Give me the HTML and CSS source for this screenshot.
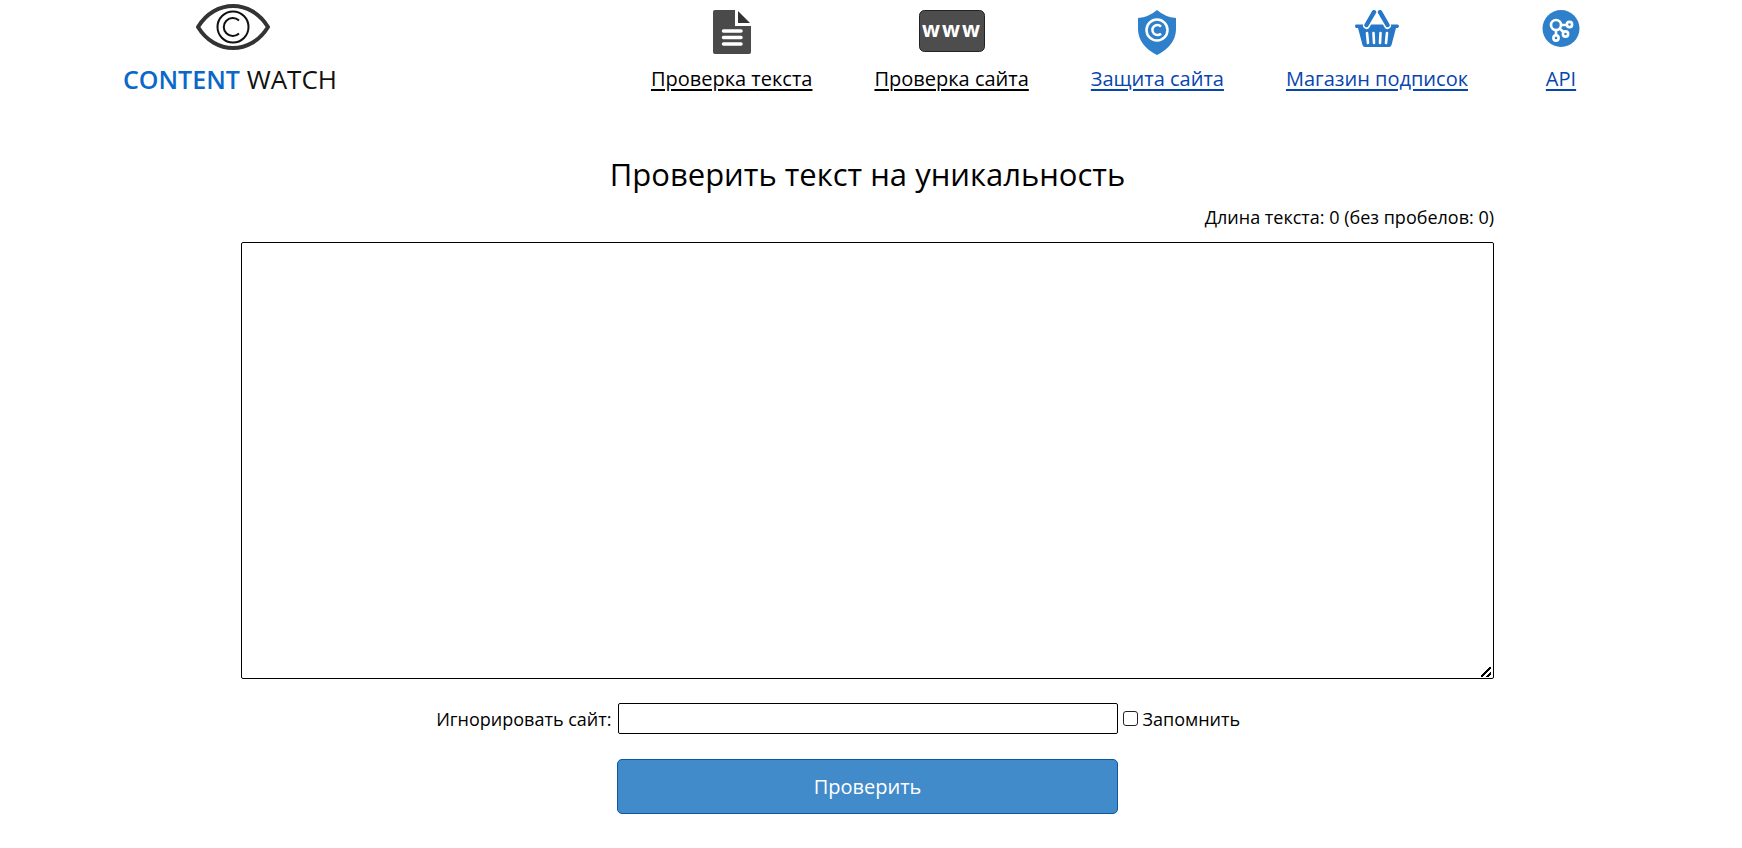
FILE: index.html
```
<!DOCTYPE html>
<html lang="ru">
<head>
<meta charset="utf-8">
<meta name="viewport" content="width=device-width, initial-scale=1">
<title>Content Watch</title>
<link rel="stylesheet" href="styles.css">
</head>
<body>
<header class="header">
  <a class="logo" href="#">
    <svg class="logo-eye" width="76" height="48" viewBox="0 0 76 48" fill="none" aria-hidden="true">
      <path d="M3 24C20-4 56-4 73 24C56 52 20 52 3 24Z" stroke="#333" stroke-width="4" stroke-linejoin="round"/>
      <circle cx="38" cy="24" r="15.500" stroke="#111" stroke-width="2"/>
      <path d="M44 17.500A9 9 0 1 0 44 30.500" stroke="#111" stroke-width="2"/>
    </svg>
    <span class="logo-text"><b class="logo-accent">CONTENT</b> WATCH</span>
  </a>
  <nav class="nav">
    <a class="nav-link nav-dark" href="#">
      <svg class="nav-icon" width="38" height="44" viewBox="0 0 38 44" aria-hidden="true">
        <path d="M2 0H22V16H38V42Q38 44 36 44H2Q0 44 0 42V2Q0 0 2 0Z" fill="#4a4a4a"/>
        <path d="M25 1V13H37Z" fill="#333"/>
        <path d="M10.500 21H28M10.500 27.500H28M10.500 34H28" stroke="#fff" stroke-width="3.500" stroke-linecap="round"/>
      </svg>
      <span>Проверка текста</span>
    </a>
    <a class="nav-link nav-dark" href="#">
      <svg class="nav-icon" width="66" height="44" viewBox="0 0 66 44" aria-hidden="true">
        <rect x=".5" y=".5" width="65" height="41" rx="5" fill="#4d4d4d" stroke="#222"/>
        <g class="www" text-anchor="middle">
          <text x="12" y="27">w</text>
          <text x="32" y="27">w</text>
          <text x="52" y="27">w</text>
        </g>
      </svg>
      <span>Проверка сайта</span>
    </a>
    <a class="nav-link" href="#">
      <svg class="nav-icon" width="38" height="45" viewBox="0 0 38 45" fill="none" aria-hidden="true">
        <path d="M19 0Q27 7 38 8V20Q37 36 19 45Q1 36 0 20V8Q11 7 19 0Z" fill="#2f80cb"/>
        <circle cx="19" cy="20" r="10.500" stroke="#fff" stroke-width="2.500"/>
        <path d="M23 16.500A5 5 0 1 0 23 23.500" stroke="#fff" stroke-width="2.500"/>
      </svg>
      <span>Защита сайта</span>
    </a>
    <a class="nav-link" href="#">
      <svg class="nav-icon" width="44" height="38" viewBox="0 0 44 38" fill="none" aria-hidden="true">
        <path d="M1.500 14.500H42.500Q44 14.500 44 16T42.500 18H41L36.500 35Q36 37 34 37H10Q8 37 7.500 35L3 18H1.500Q0 18 0 16T1.500 14.500Z" fill="#2677c7"/>
        <path d="M11.500 15.500L19 2M32.500 15.500L25 2" stroke="#fff" stroke-width="7" stroke-linecap="round"/>
        <path d="M11.500 15L19 2.200M32.500 15L25 2.200" stroke="#2677c7" stroke-width="4.400" stroke-linecap="round"/>
        <path d="M12 23L13 33M18.500 23L19 33M25.500 23L25 33M32 23L31 33" stroke="#fff" stroke-width="2.600" stroke-linecap="round"/>
      </svg>
      <span>Магазин подписок</span>
    </a>
    <a class="nav-link" href="#">
      <svg class="nav-icon" width="38" height="38" viewBox="0 0 38 38" fill="none" aria-hidden="true">
        <circle cx="19" cy="18.500" r="18.500" fill="#2f80cb"/>
        <g stroke="#fff" stroke-width="2.600">
          <circle cx="14" cy="15" r="5"/>
          <circle cx="27.500" cy="14.500" r="2.600"/>
          <circle cx="23.500" cy="24" r="2.600"/>
          <circle cx="14" cy="28" r="2.600"/>
          <path d="M19 15H25M17.500 18.500L21.500 22M14 20V25.500"/>
        </g>
      </svg>
      <span>API</span>
    </a>
  </nav>
</header>
<main class="main">
  <h1 class="title">Проверить текст на уникальность</h1>
  <form class="form">
    <label class="counter" for="text">Длина текста: 0 (без пробелов: 0)</label>
    <textarea class="text" id="text"></textarea>
    <div class="options">
      <label class="ignore-label" for="ignore">Игнорировать сайт:</label>
      <input class="ignore" id="ignore" type="text">
      <div class="remember">
        <input class="check" id="remember" type="checkbox">
        <label for="remember">Запомнить</label>
      </div>
    </div>
    <button class="submit" type="button">Проверить</button>
  </form>
</main>
</body>
</html>
```

FILE: styles.css
```
* { box-sizing: border-box; }
body {
  margin: 0;
  padding-right: 7px;
  background: #fff;
  color: #000;
  font-family: "Open Sans", "Noto Sans", sans-serif;
  font-size: 18px;
  line-height: 24px;
}
.header {
  display: flex;
  justify-content: space-between;
  align-items: flex-start;
  padding: 3px 143px 0 123px;
}
.logo {
  display: flex;
  flex-direction: column;
  align-items: center;
  gap: 12px;
  color: #111;
  text-decoration: none;
}
.logo-eye { margin-left: 6px; }
.logo-text {
  font-size: 26px;
  line-height: 32px;
  white-space: nowrap;
}
.logo-accent {
  color: #0b68c8;
  font-size: 25px;
  font-weight: 600;
}
.nav {
  display: flex;
  gap: 62px;
  padding-top: 7px;
}
.nav-link {
  display: grid;
  grid-template-rows: 54px 30px;
  justify-items: center;
  min-width: 62px;
  color: #0645ad;
  font-size: 20px;
  line-height: 30px;
  text-decoration: underline;
  text-decoration-thickness: 2px;
  text-underline-offset: 3px;
  white-space: nowrap;
}
.nav-dark { color: #000; }
.www {
  fill: #fff;
  font-family: "Open Sans", sans-serif;
  font-size: 21px;
  font-weight: 700;
}
.main {
  width: 1253px;
  max-width: 94%;
  margin: 0 auto;
}
.title {
  margin: 55px 0 7px;
  font-size: 31px;
  font-weight: 400;
  line-height: 48px;
  text-align: center;
}
.form {
  display: flex;
  flex-direction: column;
  align-items: center;
}
.counter { align-self: flex-end; }
.text {
  width: 100%;
  height: 437px;
  margin: 13px 0 24px;
  border: 1px solid #000;
  border-radius: 2px;
  font: inherit;
}
.text::-webkit-resizer {
  background:
    linear-gradient(135deg, transparent 44%, #000 44%, #000 57%, transparent 57%, transparent 74%, #000 74%, #000 87%, transparent 87%)
    3px 4px / 10px 10px no-repeat;
}
.options {
  display: grid;
  grid-template-columns: 1fr 500px 1fr;
  align-items: center;
  width: 100%;
  margin-bottom: 25px;
}
.ignore-label { justify-self: end; margin-right: 6px; }
.ignore {
  height: 31px;
  border: 1px solid #000;
  border-radius: 2px;
  font: inherit;
}
.remember {
  display: flex;
  align-items: center;
  gap: 5px;
  padding-left: 5px;
}
.check {
  appearance: none;
  width: 15px;
  height: 15px;
  margin: 0;
  border: 1px solid #222;
  border-radius: 3px;
  background: #fff;
}
.check:checked { background: #0b68c8; }
.submit {
  width: 501px;
  height: 55px;
  border: 1px solid #0d56a6;
  border-radius: 5px;
  background: #428bca;
  color: #fff;
  font: inherit;
  font-size: 20px;
}
```
